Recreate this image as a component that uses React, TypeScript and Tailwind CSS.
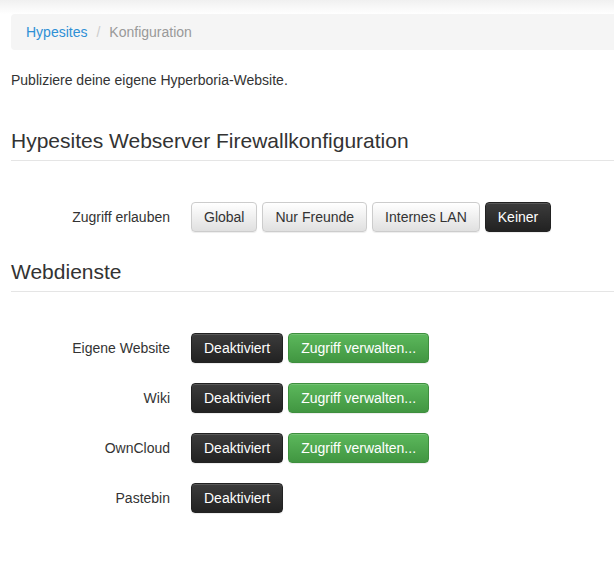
import React from "react";

const base =
  "inline-flex items-center h-[30px] px-3 rounded-[4px] border text-[14px] leading-[20px] whitespace-nowrap";
const btnDefault =
  base +
  " text-[#333] border-[#ccc] bg-gradient-to-b from-white to-[#e0e0e0] shadow-[inset_0_1px_0_rgba(255,255,255,0.15),0_1px_1px_rgba(0,0,0,0.075)]";
const btnDark =
  base +
  " text-white border-[#222] bg-gradient-to-b from-[#3c3c3c] to-[#222] shadow-[inset_0_1px_0_rgba(255,255,255,0.15),0_1px_1px_rgba(0,0,0,0.075)]";
const btnGreen =
  base +
  " text-white border-[#3e8f3e] bg-gradient-to-b from-[#5cb85c] to-[#419641] shadow-[inset_0_1px_0_rgba(255,255,255,0.15),0_1px_1px_rgba(0,0,0,0.075)]";

function Row({ label, children }: { label: string; children: React.ReactNode }) {
  return (
    <div className="flex items-center h-[30px] gap-[21px]">
      <div className="w-[159px] text-right text-[14px] leading-[20px] text-[#333]">{label}</div>
      <div className="flex items-center gap-[5px]">{children}</div>
    </div>
  );
}

function Legend({ children }: { children: React.ReactNode }) {
  return (
    <div className="text-[21px] leading-[30px] text-[#333] pb-[4px] border-b border-[#e5e5e5]">
      {children}
    </div>
  );
}

export default function App() {
  const services = [
    { name: "Eigene Website", manage: true },
    { name: "Wiki", manage: true },
    { name: "OwnCloud", manage: true },
    { name: "Pastebin", manage: false },
  ];
  return (
    <div
      className="w-[614px] h-[578px] overflow-hidden bg-white text-[#333]"
      style={{ fontFamily: '"Liberation Sans", Arial, sans-serif' }}
    >
      <div className="h-[14px] bg-gradient-to-b from-[#f0f0f0] to-white" />
      <div className="pl-[11px] w-[630px]">
        <div className="h-[36px] flex items-center px-[15px] bg-[#f5f5f5] rounded-[4px] text-[14px] leading-[20px]">
          <span className="text-[#2e90d6]">Hypesites</span>
          <span className="text-[#ccc] px-[9px]">/</span>
          <span className="text-[#999]">Konfiguration</span>
        </div>
        <p className="mt-[20px] text-[14px] leading-[20px]">Publiziere deine eigene Hyperboria-Website.</p>
        <div className="mt-[36px]">
          <Legend>Hypesites Webserver Firewallkonfiguration</Legend>
        </div>
        <div className="mt-[41px]">
          <Row label="Zugriff erlauben">
            <button className={btnDefault}>Global</button>
            <button className={btnDefault}>Nur Freunde</button>
            <button className={btnDefault}>Internes LAN</button>
            <button className={btnDark}>Keiner</button>
          </Row>
        </div>
        <div className="mt-[25px]">
          <Legend>Webdienste</Legend>
        </div>
        <div className="mt-[41px] flex flex-col gap-[20px]">
          {services.map((s) => (
            <Row key={s.name} label={s.name}>
              <button className={btnDark}>Deaktiviert</button>
              {s.manage && <button className={btnGreen}>Zugriff verwalten...</button>}
            </Row>
          ))}
        </div>
      </div>
    </div>
  );
}
